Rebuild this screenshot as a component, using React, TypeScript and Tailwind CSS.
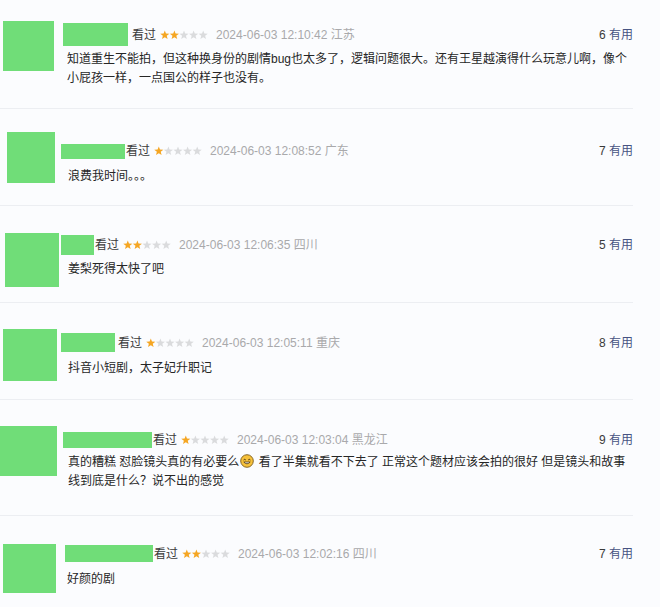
import React from "react";

type Review = {
  boxCls: string;
  avatarCls: string;
  colCls: string;
  nameCls: string;
  textCls: string;
  stars: number;
  date: string;
  region: string;
  useful: number;
  body: React.ReactNode;
};

const STAR_POINTS =
  "5,0.2 6.23,3.5 9.76,3.65 7,5.85 7.94,9.25 5,7.3 2.06,9.25 3,5.85 0.24,3.65 3.77,3.5";

function Stars({ n }: { n: number }) {
  return (
    <svg width="48" height="10" viewBox="0 0 50 10" className="shrink-0">
      {[0, 1, 2, 3, 4].map((i) => (
        <polygon
          key={i}
          points={STAR_POINTS}
          transform={`translate(${i * 10} 0)`}
          fill={i < n ? "#f5a623" : "#dadbdd"}
        />
      ))}
    </svg>
  );
}

function Smile() {
  return (
    <svg width="14" height="14" viewBox="0 0 14 14" className="inline-block align-[-2px] mx-[1px]">
      <circle cx="7" cy="7" r="6.3" fill="#f6c13b" stroke="#7a5a1a" strokeWidth="0.9" />
      <path d="M3.6 6 Q4.7 4.6 5.8 6" stroke="#4a3410" strokeWidth="1" fill="none" />
      <path d="M8.2 6 Q9.3 4.6 10.4 6" stroke="#4a3410" strokeWidth="1" fill="none" />
      <path d="M3.8 8 Q7 11.6 10.2 8 Z" fill="#ffffff" stroke="#4a3410" strokeWidth="0.8" />
    </svg>
  );
}

const reviews: Review[] = [
  {
    boxCls: "h-[109px] border-b border-[#eceef2]",
    avatarCls: "ml-[3px] mt-[21px] w-[51px] h-[50px]",
    colCls: "ml-[9px] mt-[23px]",
    nameCls: "w-[65px] h-[23px] mr-[4px]",
    textCls: "mt-[4px] ml-[4px]",
    stars: 2,
    date: "2024-06-03 12:10:42",
    region: "江苏",
    useful: 6,
    body: (
      <>
        知道重生不能拍，但这种换身份的剧情bug也太多了，逻辑问题很大。还有王星越演得什么玩意儿啊，像个
        <br />
        小屁孩一样，一点国公的样子也没有。
      </>
    ),
  },
  {
    boxCls: "h-[97px] border-b border-[#eceef2]",
    avatarCls: "ml-[7px] mt-[23px] w-[48px] h-[51px]",
    colCls: "ml-[6px] mt-[34px]",
    nameCls: "w-[64px] h-[15px] mr-[1px]",
    textCls: "mt-[8px] ml-[7px]",
    stars: 1,
    date: "2024-06-03 12:08:52",
    region: "广东",
    useful: 7,
    body: <>浪费我时间。。。</>,
  },
  {
    boxCls: "h-[97px] border-b border-[#eceef2]",
    avatarCls: "ml-[5px] mt-[27px] w-[54px] h-[54px]",
    colCls: "ml-[2px] mt-[29px]",
    nameCls: "w-[33px] h-[20px] mr-[1px]",
    textCls: "mt-[5px] ml-[7px]",
    stars: 2,
    date: "2024-06-03 12:06:35",
    region: "四川",
    useful: 5,
    body: <>姜梨死得太快了吧</>,
  },
  {
    boxCls: "h-[97px] border-b border-[#eceef2]",
    avatarCls: "ml-[3px] mt-[26px] w-[54px] h-[52px]",
    colCls: "ml-[4px] mt-[30px]",
    nameCls: "w-[54px] h-[19px] mr-[3px]",
    textCls: "mt-[7px] ml-[7px]",
    stars: 1,
    date: "2024-06-03 12:05:11",
    region: "重庆",
    useful: 8,
    body: <>抖音小短剧，太子妃升职记</>,
  },
  {
    boxCls: "h-[116px] border-b border-[#eceef2]",
    avatarCls: "ml-0 mt-[26px] w-[57px] h-[50px]",
    colCls: "ml-[6px] mt-[32px]",
    nameCls: "w-[89px] h-[16px] mr-[1px]",
    textCls: "mt-[5px] ml-[5px]",
    stars: 1,
    date: "2024-06-03 12:03:04",
    region: "黑龙江",
    useful: 9,
    body: (
      <>
        真的糟糕 怼脸镜头真的有必要么
        <Smile /> 看了半集就看不下去了 正常这个题材应该会拍的很好 但是镜头和故事
        <br />
        线到底是什么？说不出的感觉
      </>
    ),
  },
  {
    boxCls: "h-[91px]",
    avatarCls: "ml-[3px] mt-[28px] w-[53px] h-[49px]",
    colCls: "ml-[9px] mt-[29px]",
    nameCls: "w-[88px] h-[17px] mr-[1px]",
    textCls: "mt-[8px] ml-[2px]",
    stars: 2,
    date: "2024-06-03 12:02:16",
    region: "四川",
    useful: 7,
    body: <>好颜的剧</>,
  },
];

function ReviewItem({ r }: { r: Review }) {
  return (
    <div className={`flex w-[633px] items-start ${r.boxCls}`}>
      <div className={`shrink-0 bg-[#70dd78] ${r.avatarCls}`} />
      <div className={`flex min-w-0 flex-1 flex-col ${r.colCls}`}>
        <div className="flex items-center text-[12px] leading-[16px]">
          <div className={`shrink-0 bg-[#70dd78] ${r.nameCls}`} />
          <span className="text-[#3a3a3a]">看过</span>
          <span className="ml-[4px] flex items-center">
            <Stars n={r.stars} />
          </span>
          <span className="ml-[8px] text-[#a9a9ab]">
            {r.date} {r.region}
          </span>
          <span className="ml-auto text-[#3a3a3a]">
            {r.useful} <span className="text-[#465382]">有用</span>
          </span>
        </div>
        <p className={`text-[12px] leading-[19px] text-[#262626] ${r.textCls}`}>{r.body}</p>
      </div>
    </div>
  );
}

export default function App() {
  return (
    <div className="h-[607px] w-[660px] overflow-hidden bg-[#fbfcfe] font-['Liberation_Sans','Noto_Sans_CJK_SC',sans-serif]">
      {reviews.map((r, i) => (
        <ReviewItem key={i} r={r} />
      ))}
    </div>
  );
}
